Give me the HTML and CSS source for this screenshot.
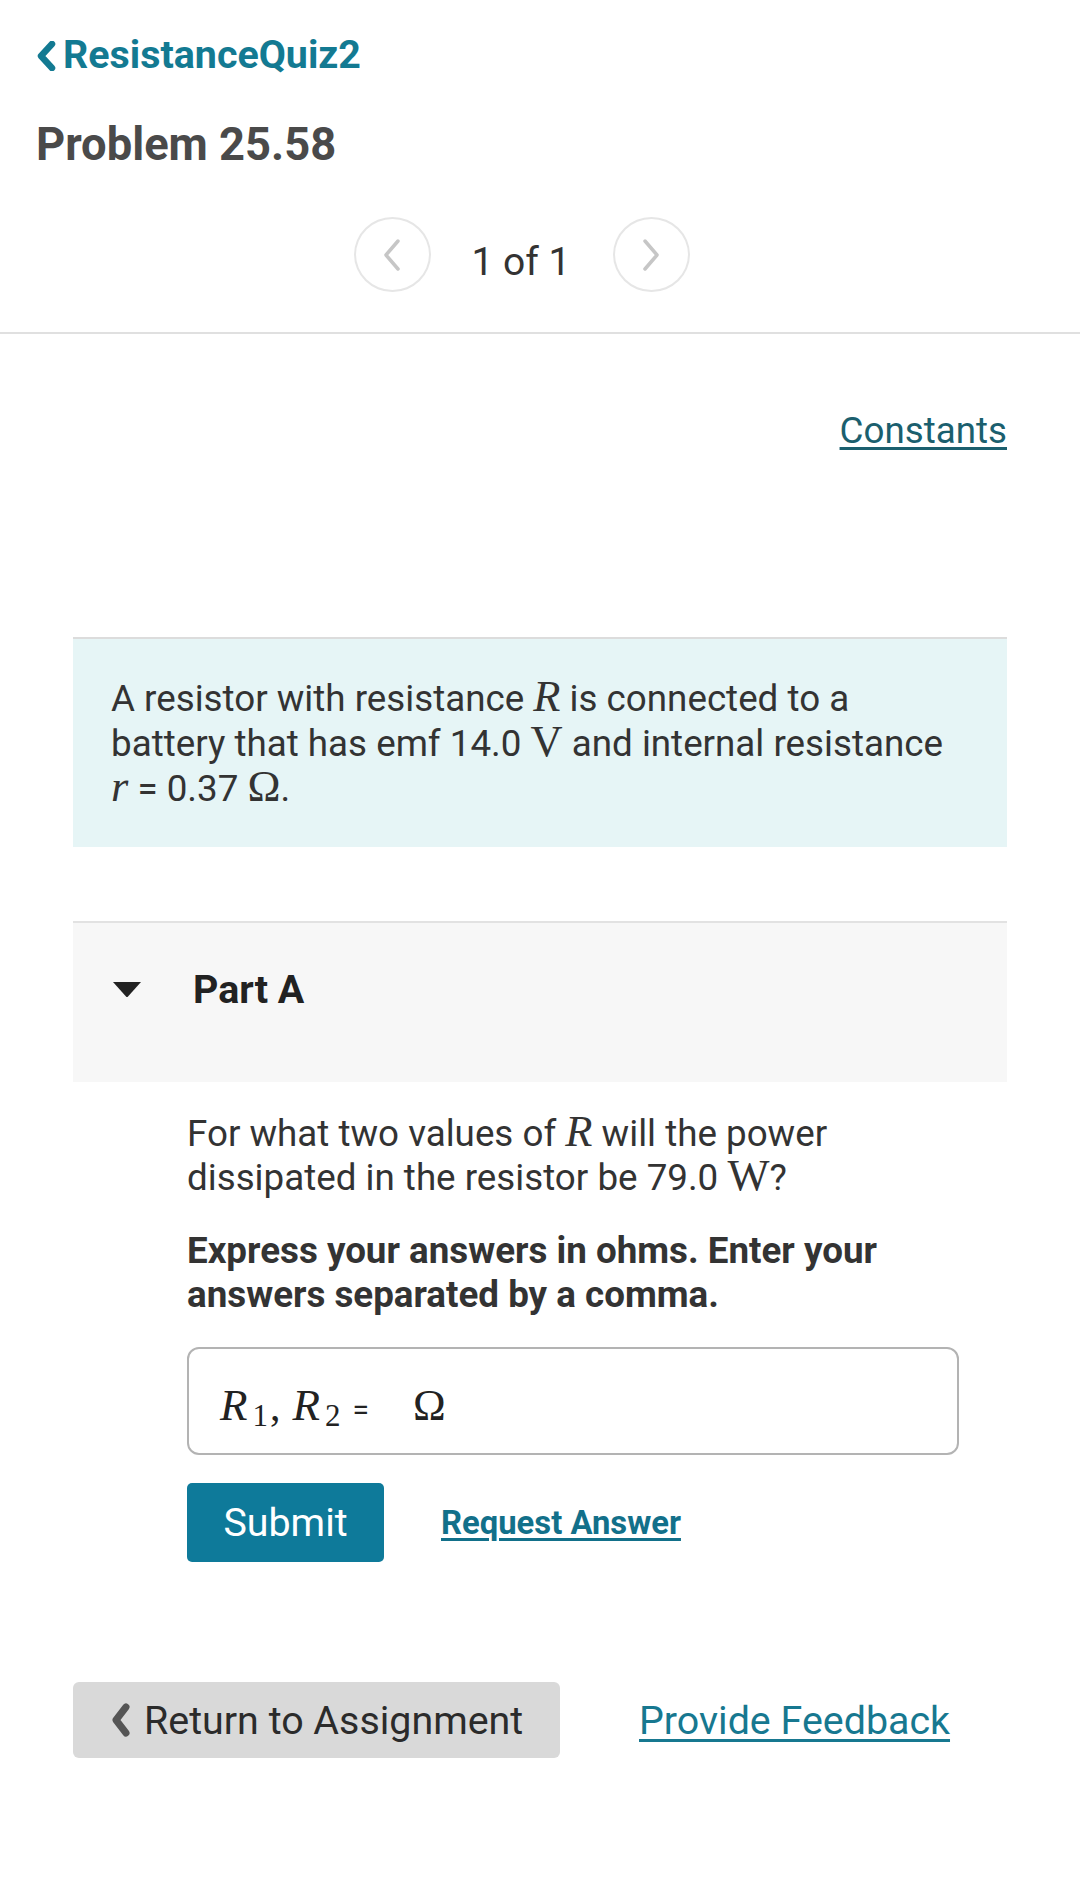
FILE: index.html
```html
<!DOCTYPE html>
<html lang="en">
<head>
<meta charset="utf-8">
<title>Problem 25.58</title>
<link rel="stylesheet" href="styles.css">
</head>
<body>
<div class="page">
  <header class="top">
    <a class="back-link" href="#">
      <svg class="back-chevron" width="20" height="30" viewBox="0 0 20 30"><path d="M16 3 L5 15 L16 27" fill="none" stroke="#137a92" stroke-width="6.5" stroke-linecap="round" stroke-linejoin="round"/></svg>
      <span>ResistanceQuiz2</span>
    </a>
    <h1 class="title">Problem 25.58</h1>
    <nav class="pager">
      <span class="pager-btn"><svg width="20" height="32" viewBox="0 0 20 32"><path d="M16 2 L4 16 L16 30" fill="none" stroke="#c6c6c6" stroke-width="3.5" stroke-linecap="round" stroke-linejoin="round"/></svg></span>
      <span class="pager-count">1 of 1</span>
      <span class="pager-btn"><svg width="20" height="32" viewBox="0 0 20 32"><path d="M4 2 L16 16 L4 30" fill="none" stroke="#c6c6c6" stroke-width="3.5" stroke-linecap="round" stroke-linejoin="round"/></svg></span>
    </nav>
  </header>

  <main class="content">
    <div class="constants-row"><a class="constants" href="#">Constants</a></div>

    <section class="intro">
      <p>A resistor with resistance <span class="mi">R</span> is connected to a battery that has emf 14.0 <span class="mu">V</span> and internal resistance <span class="mi">r</span> = 0.37 <span class="mu">Ω</span>.</p>
    </section>

    <section class="part">
      <div class="part-head">
        <svg class="part-toggle" width="28" height="16" viewBox="0 0 28 16"><path d="M0 1 L28 1 L15 15.5 Q14 16.5 13 15.5 Z" fill="#222"/></svg>
        <h2 class="part-title">Part A</h2>
      </div>
      <div class="part-body">
        <p class="question">For what two values of <span class="mi">R</span> will the power dissipated in the resistor be 79.0 <span class="mu">W</span>?</p>
        <p class="instr">Express your answers in ohms. Enter your answers separated by a comma.</p>
        <div class="answer-box">
          <span class="mvar">R</span><span class="msub">1</span><span class="mcomma">,</span><span class="mvar">R</span><span class="msub">2</span><span class="eq">=</span><span class="momega">Ω</span>
        </div>
        <div class="actions">
          <button class="submit" type="button">Submit</button>
          <a class="request" href="#">Request Answer</a>
        </div>
      </div>
    </section>

    <div class="footer-actions">
      <button class="return" type="button">
        <svg width="22" height="34" viewBox="0 0 22 34"><path d="M16 4 L6 17 L16 30" fill="none" stroke="#555" stroke-width="7" stroke-linecap="round" stroke-linejoin="round"/></svg>
        <span>Return to Assignment</span>
      </button>
      <a class="feedback" href="#">Provide Feedback</a>
    </div>
  </main>
</div>
</body>
</html>
```

FILE: styles.css
```css
* { box-sizing: border-box; }

html, body {
  margin: 0;
  padding: 0;
  background: #ffffff;
}

body {
  font-family: Roboto, "Liberation Sans", sans-serif;
  color: #333333;
}

.page {
  width: 1080px;
  min-height: 1884px;
}

/* ---------- header ---------- */
.top {
  border-bottom: 2px solid #e0e0e0;
  padding-bottom: 40px;
}

.back-link {
  display: flex;
  align-items: center;
  gap: 7px;
  padding: 32px 0 0 36px;
  height: 78px;
  font-size: 39.4px;
  line-height: 46px;
  font-weight: 700;
  color: #137a92;
  text-decoration: none;
}

.back-chevron {
  flex: none;
  margin-top: 2px;
}

.title {
  margin: 41px 0 0 36px;
  font-size: 45.3px;
  line-height: 52px;
  font-weight: 700;
  color: #4a4a4a;
}

.pager {
  margin-top: 46px;
  display: flex;
  justify-content: center;
  align-items: center;
  padding-right: 37px;
}

.pager-btn {
  width: 77px;
  height: 75px;
  border: 2px solid #e6e6e6;
  border-radius: 50%;
  display: flex;
  align-items: center;
  justify-content: center;
}

.pager-count {
  font-size: 39px;
  line-height: 44px;
  color: #333;
  margin: 14px 42px 0 41px;
}

/* ---------- content ---------- */
.content {
  padding: 0 73px;
}

.constants-row {
  display: flex;
  justify-content: flex-end;
  padding-top: 75px;
}

.constants {
  font-size: 36.75px;
  line-height: 44px;
  color: #1b5f6e;
  text-decoration: underline;
  text-decoration-thickness: 3px;
  text-underline-offset: 4px;
}

.mi {
  font-family: "Liberation Serif", "Times New Roman", serif;
  font-style: italic;
  font-size: 1.21em;
  line-height: 0;
}

.mu {
  font-family: "Liberation Serif", "Times New Roman", serif;
  font-size: 1.21em;
  line-height: 0;
}

.intro {
  margin-top: 184px;
  border-top: 2px solid #dcdcdc;
  background: #e6f5f6;
  padding: 37px 50px 36px 38px;
}

.intro p {
  margin: 0;
  font-size: 36.75px;
  line-height: 45px;
  color: #333;
}

/* ---------- part ---------- */
.part {
  margin-top: 74px;
}

.part-head {
  border-top: 2px solid #e2e2e2;
  background: #f7f7f7;
  display: flex;
  align-items: center;
  padding: 44px 0 69px 40px;
  gap: 52px;
}

.part-toggle {
  flex: none;
  margin-top: -2px;
}

.part-title {
  margin: 0;
  font-size: 39.4px;
  line-height: 46px;
  font-weight: 700;
  color: #222;
}

.part-body {
  padding: 30px 48px 0 114px;
}

.question {
  margin: 0;
  font-size: 36.75px;
  line-height: 44px;
  color: #333;
}

.instr {
  margin: 29px 0 0;
  font-size: 36.75px;
  line-height: 44px;
  font-weight: 700;
  color: #333;
}

.answer-box {
  margin-top: 30px;
  height: 108px;
  border: 2px solid #b3b3b3;
  border-radius: 12px;
  display: flex;
  align-items: baseline;
  padding: 34px 0 0 31px;
  color: #222;
  line-height: 44px;
}

.mvar {
  font-family: "Liberation Serif", "Times New Roman", serif;
  font-style: italic;
  font-size: 45px;
  margin-right: 5px;
}

.msub {
  font-family: "Liberation Serif", "Times New Roman", serif;
  font-size: 31px;
  position: relative;
  top: 6px;
}

.mcomma {
  font-family: "Liberation Serif", "Times New Roman", serif;
  font-size: 42px;
  margin: 0 12px 0 2px;
}

.eq {
  font-size: 30px;
  margin-left: 12px;
}

.momega {
  font-family: "Liberation Serif", "Times New Roman", serif;
  font-size: 44px;
  margin-left: 44px;
}

.actions {
  margin-top: 28px;
  display: flex;
  align-items: center;
  gap: 57px;
}

.submit {
  width: 197px;
  height: 79px;
  border: none;
  border-radius: 5px;
  background: #0e7a9a;
  color: #ffffff;
  font-family: Roboto, "Liberation Sans", sans-serif;
  font-size: 39.4px;
  padding: 0;
}

.request {
  font-size: 32.8px;
  font-weight: 700;
  color: #12708a;
  text-decoration: underline;
  text-decoration-thickness: 3px;
  text-underline-offset: 4px;
}

/* ---------- footer ---------- */
.footer-actions {
  margin-top: 120px;
  display: flex;
  align-items: center;
  gap: 79px;
}

.return {
  width: 487px;
  height: 76px;
  border: none;
  border-radius: 6px;
  background: #d9d9d9;
  display: flex;
  align-items: center;
  gap: 12px;
  padding: 0 0 0 37px;
  font-family: Roboto, "Liberation Sans", sans-serif;
  font-size: 39.4px;
  color: #2b2b2b;
}

.return svg {
  flex: none;
}

.feedback {
  font-size: 39.4px;
  color: #177890;
  text-decoration: underline;
  text-decoration-thickness: 3px;
  text-underline-offset: 5px;
}
```
